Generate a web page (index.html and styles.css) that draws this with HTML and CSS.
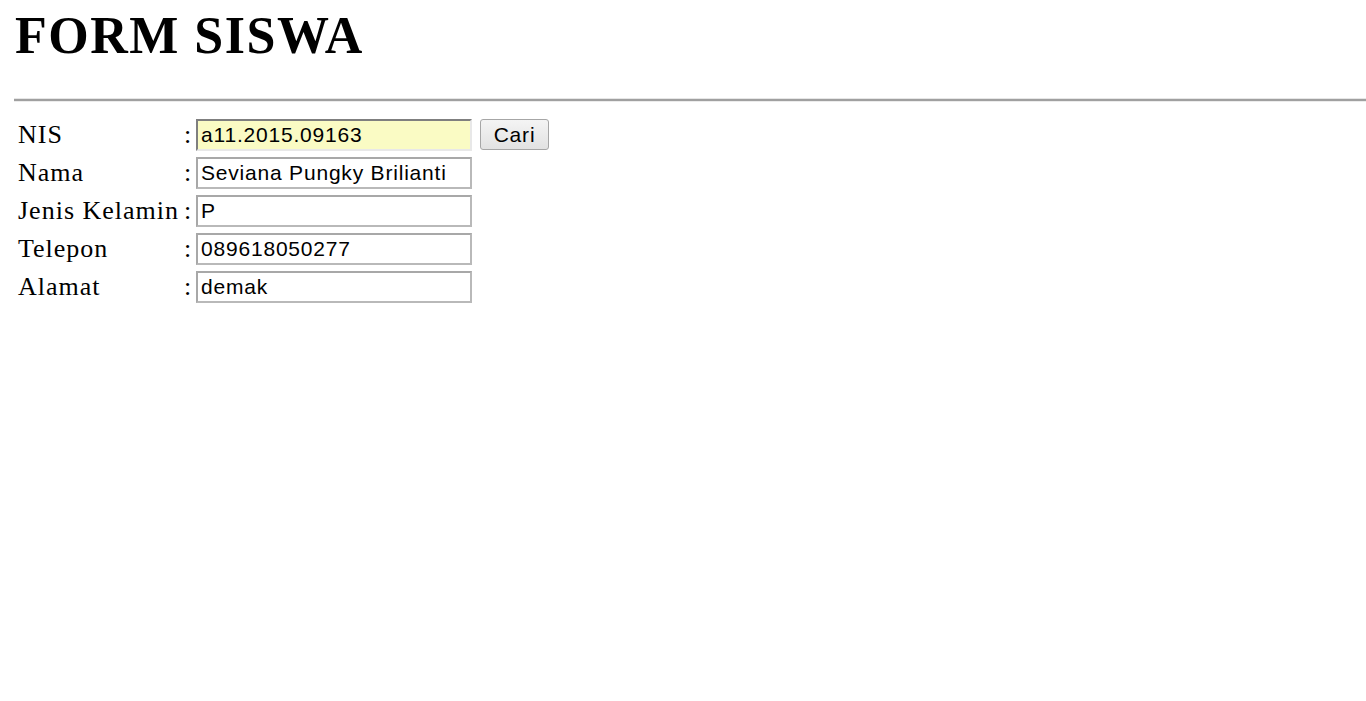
FILE: index.html
```html
<!DOCTYPE html>
<html lang="id">
<head>
<meta charset="utf-8">
<title>Form Siswa</title>
<link rel="stylesheet" href="styles.css">
</head>
<body>
<div class="page">
  <h1 class="title">FORM SISWA</h1>
  <hr class="rule">
  <form class="form">
    <label class="label" for="nis">NIS</label><span class="colon">:</span>
    <div class="field"><input id="nis" class="input input-auto" type="text" value="a11.2015.09163"><button type="button" class="btn">Cari</button></div>

    <label class="label" for="nama">Nama</label><span class="colon">:</span>
    <div class="field"><input id="nama" class="input" type="text" value="Seviana Pungky Brilianti"></div>

    <label class="label" for="jk">Jenis Kelamin</label><span class="colon">:</span>
    <div class="field"><input id="jk" class="input" type="text" value="P"></div>

    <label class="label" for="tel">Telepon</label><span class="colon">:</span>
    <div class="field"><input id="tel" class="input" type="text" value="089618050277"></div>

    <label class="label" for="alamat">Alamat</label><span class="colon">:</span>
    <div class="field"><input id="alamat" class="input" type="text" value="demak"></div>
  </form>
</div>
</body>
</html>
```

FILE: styles.css
```css
html, body {
  margin: 0;
  padding: 0;
  background: #ffffff;
}

body {
  font-family: "Liberation Serif", "Times New Roman", serif;
  color: #000;
}

.page {
  padding: 10px 0 0 14px;
}

.title {
  margin: 0 0 0 1px;
  font-size: 52px;
  line-height: 1;
  font-weight: bold;
  letter-spacing: 1.5px;
}

.rule {
  margin: 36px 0 0 0;
  height: 2px;
  border: none;
  border-top: 1px solid #e6e6e6;
  border-bottom: 1px solid #ececec;
  background: #a0a0a0;
}

.form {
  margin-top: 17px;
  display: grid;
  grid-template-columns: 170px 12px auto;
  grid-auto-rows: 32px;
  row-gap: 6px;
  justify-content: start;
}

.label {
  padding-left: 4px;
  font-size: 26px;
  line-height: 32px;
  letter-spacing: 1px;
  white-space: nowrap;
}

.colon {
  padding-left: 0;
  font-size: 26px;
  line-height: 32px;
}

.field {
  display: flex;
  gap: 8px;
  align-items: flex-start;
}

.input {
  box-sizing: border-box;
  width: 276px;
  height: 32px;
  margin: 0;
  padding: 0 3px;
  font-family: "Liberation Sans", Arial, sans-serif;
  font-size: 21px;
  letter-spacing: 0.8px;
  color: #000;
  background: #fff;
  border: 2px solid #b9b9b9;
  border-top-color: #a8a8a8;
  border-left-color: #a8a8a8;
  outline: none;
}

.input-auto {
  background: #fafbc4;
  border-top-color: #7f7f7f;
  border-left-color: #7f7f7f;
  border-right-color: #e8e8e8;
  border-bottom-color: #e8e8e8;
}

.btn {
  box-sizing: border-box;
  width: 69px;
  height: 31px;
  margin: 0;
  padding: 0;
  font-family: "Liberation Sans", Arial, sans-serif;
  font-size: 21px;
  letter-spacing: 0.8px;
  color: #000;
  background: linear-gradient(#f4f4f4, #e2e2e2);
  border: 1px solid #a6a6a6;
  border-radius: 3px;
}
```
